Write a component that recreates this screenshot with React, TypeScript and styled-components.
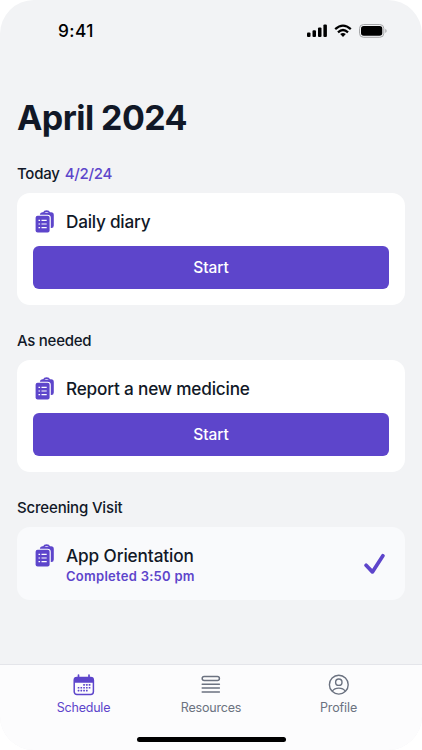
import React from "react";
import styled, { createGlobalStyle } from "styled-components";

const purple = "#5d45cb";
const ink = "#111827";

const GlobalStyle = createGlobalStyle`
  * { box-sizing: border-box; }
  body { margin: 0; background: #fff; font-family: Inter, "Liberation Sans", sans-serif; }
`;

const Screen = styled.div`
  width: 422px;
  height: 750px;
  display: flex;
  flex-direction: column;
  overflow: hidden;
  border-radius: 34px;
  background: #f2f3f5;
  color: ${ink};
`;

const StatusBar = styled.header`
  height: 61px;
  padding: 0 35px 0 58px;
  display: flex;
  align-items: center;
  justify-content: space-between;
  color: #000;
`;

const Clock = styled.span`
  font-size: 17.3px;
  font-weight: 550;
  letter-spacing: 0.4px;
  line-height: 20px;
`;

const StatusIcons = styled.div`
  display: flex;
  align-items: center;
  gap: 7px;
  svg { display: block; }
`;

const Content = styled.main`
  flex: 1;
  padding: 35px 17px 0;
`;

const Title = styled.h1`
  margin: 0;
  font-size: 34px;
  line-height: 44px;
  font-weight: 700;
  letter-spacing: -0.56px;
  white-space: nowrap;
`;

const Section = styled.section<{ $gap: number }>`
  margin-top: ${(p) => p.$gap}px;
`;

const SectionTitle = styled.h2<{ $spacing: number }>`
  margin: 0 0 9px;
  font-size: 15px;
  line-height: 20px;
  font-weight: 540;
  letter-spacing: ${(p) => p.$spacing}px;
  white-space: nowrap;
`;

const DateText = styled.span`
  margin-left: 5px;
  color: ${purple};
`;

const Card = styled.article<{ $muted?: boolean }>`
  height: ${(p) => (p.$muted ? 73 : 112)}px;
  padding: 16px;
  border-radius: 13px;
  background: ${(p) => (p.$muted ? "#f9fafc" : "#fff")};
`;

const TaskRow = styled.div`
  display: flex;
  align-items: flex-start;
  svg { display: block; flex: none; }
`;

const TaskIcon = styled.div`
  width: 33px;
  padding: 1px 0 0 2px;
`;

const TaskText = styled.div`
  flex: 1;
`;

const TaskName = styled.h3<{ $spacing: number }>`
  margin: 0;
  font-size: 17.2px;
  line-height: 25px;
  font-weight: 520;
  letter-spacing: ${(p) => p.$spacing}px;
  white-space: nowrap;
`;

const Completed = styled.p`
  margin: 0;
  color: ${purple};
  font-size: 13px;
  line-height: 16px;
  font-weight: 600;
  letter-spacing: 0.27px;
`;

const DoneMark = styled.div`
  padding: 10px 3px 0 0;
`;

const StartButton = styled.button`
  display: block;
  width: 100%;
  height: 43px;
  margin-top: 12px;
  padding: 0;
  border: 0;
  border-radius: 6px;
  background: ${purple};
  color: #fff;
  font: 500 15.5px/43px Inter, sans-serif;
  letter-spacing: -0.05px;
`;

const TabBar = styled.nav`
  height: 86px;
  border-top: 1px solid #e4e5ea;
  background: #fcfcfd;
  display: flex;
  flex-direction: column;
  align-items: center;
`;

const Tabs = styled.div`
  height: 72px;
  display: grid;
  grid-template-columns: repeat(3, 127.5px);
`;

const Tab = styled.a<{ $active?: boolean }>`
  display: flex;
  flex-direction: column;
  align-items: center;
  padding-top: 9px;
  color: ${(p) => (p.$active ? purple : "#6b7280")};
  svg { display: block; }
`;

const TabLabel = styled.span<{ $spacing: number }>`
  margin-top: 4px;
  font-size: 12.5px;
  line-height: 16px;
  letter-spacing: ${(p) => p.$spacing}px;
`;

const HomeIndicator = styled.div`
  width: 149px;
  height: 5px;
  border-radius: 3px;
  background: #000;
`;

const Signal = () => (
  <svg width="20" height="14" viewBox="0 0 20 14">
    <rect x="0" y="8.5" width="3.5" height="4.5" rx="1.1" />
    <rect x="5.5" y="6.3" width="3.5" height="6.7" rx="1.1" />
    <rect x="11" y="3.4" width="3.5" height="9.6" rx="1.1" />
    <rect x="16.4" y="0.4" width="3.5" height="12.6" rx="1.1" />
  </svg>
);

const Wifi = () => (
  <svg width="18" height="14" viewBox="0 0 18 14" fill="none" stroke="#000" strokeWidth="2.3">
    <path d="M1.2 5.1Q9 -1.9 16.8 5.1M4 8.3Q9 3.7 14 8.3" />
    <path d="M6.2 10.1Q9 7.9 11.8 10.1L9 13Z" fill="#000" stroke="none" />
  </svg>
);

const Battery = () => (
  <svg width="28" height="14" viewBox="0 0 28 14">
    <rect x=".5" y=".5" width="24.3" height="12.8" rx="4" fill="none" stroke="#a5a6a8" />
    <rect x="2" y="2" width="21.3" height="9.8" rx="2.7" />
    <path d="M26.3 4.8Q29 6.9 26.3 9Z" fill="#a5a6a8" />
  </svg>
);

const Clipboards = () => (
  <svg width="20" height="23" viewBox="0 0 20 23">
    <path
      d="M4.8 4.7Q5 2.2 7.3 2.2H8.2Q8.7.3 11.6.3T15 2.2H16.1Q18.8 2.2 18.8 4.9V15.5Q18.8 18 16.4 18H15.8V8Q15.8 4.7 12.5 4.7Z"
      fill={purple}
    />
    <path d="M9.5 2.8Q9.8 1.9 11.6 1.9T13.7 2.8Z" fill="#fff" />
    <rect x=".6" y="5.8" width="14" height="16.6" rx="2" fill={purple} />
    <path d="M3.5 10.3h1.6M3.5 14h1.6M3.5 17.7h1.6M6.5 10.3h5.2M6.5 14h5.2M6.5 17.7h5.2" stroke="#fff" strokeWidth="1.2" />
  </svg>
);

const Check = () => (
  <svg width="22" height="22" viewBox="0 0 22 22" fill="none" stroke={purple} strokeWidth="3.7" strokeLinecap="round" strokeLinejoin="round">
    <path d="M2.1 12.3L8.4 18.9L18.9 2.7" />
  </svg>
);

const dots = [[10, 10.7], [13, 10.7], [16, 10.7], [4, 13.5], [7, 13.5], [10, 13.5], [13, 13.5], [16, 13.5], [4, 16.3], [7, 16.3], [10, 16.3], [13, 16.3]];

const Calendar = () => (
  <svg width="22" height="22" viewBox="0 0 22 22" fill={purple}>
    <path d="M5.5 1.1V5M16 1.1V5" stroke={purple} strokeWidth="1.7" strokeLinecap="round" />
    <rect x="1.2" y="3.6" width="19.2" height="16.8" rx="2.7" fill="none" stroke={purple} strokeWidth="1.5" />
    <path d="M1.3 8.8V5.6Q1.3 3.6 3.3 3.6H18.3Q20.3 3.6 20.3 5.6V8.8Z" />
    {dots.map(([x, y]) => (
      <rect key={`${x}-${y}`} x={x * 0.92 + 1} y={y - 0.6} width="1.7" height="1.7" rx=".4" />
    ))}
  </svg>
);

const List = () => (
  <svg width="22" height="22" viewBox="0 0 22 22" fill="none" stroke="currentColor" strokeWidth="1.5" strokeLinecap="round">
    <rect x="2.2" y="2.5" width="17.2" height="4.1" rx="2" />
    <path d="M2.2 10.2h17.2M2.2 14.1h17.2M2.2 18h17.2" />
  </svg>
);

const Person = () => (
  <svg width="22" height="22" viewBox="0 0 22 22" fill="none" stroke="currentColor" strokeWidth="1.4">
    <circle cx="10.8" cy="10.7" r="9.4" />
    <circle cx="10.8" cy="8.2" r="3.2" />
    <path d="M4.3 17.2C6.2 14.3 8 14.1 10.8 14.1S15.4 14.3 17.3 17.2" />
  </svg>
);

export default function App() {
  return (
    <>
      <GlobalStyle />
      <Screen>
        <StatusBar>
          <Clock>9:41</Clock>
          <StatusIcons><Signal /><Wifi /><Battery /></StatusIcons>
        </StatusBar>
        <Content>
          <Title>April 2024</Title>
          <Section $gap={24}>
            <SectionTitle $spacing={-0.25}>Today<DateText>4/2/24</DateText></SectionTitle>
            <Card>
              <TaskRow>
                <TaskIcon><Clipboards /></TaskIcon>
                <TaskText><TaskName $spacing={-0.24}>Daily diary</TaskName></TaskText>
              </TaskRow>
              <StartButton>Start</StartButton>
            </Card>
          </Section>
          <Section $gap={26}>
            <SectionTitle $spacing={-0.27}>As needed</SectionTitle>
            <Card>
              <TaskRow>
                <TaskIcon><Clipboards /></TaskIcon>
                <TaskText><TaskName $spacing={-0.19}>Report a new medicine</TaskName></TaskText>
              </TaskRow>
              <StartButton>Start</StartButton>
            </Card>
          </Section>
          <Section $gap={26}>
            <SectionTitle $spacing={-0.17}>Screening Visit</SectionTitle>
            <Card $muted>
              <TaskRow>
                <TaskIcon><Clipboards /></TaskIcon>
                <TaskText>
                  <TaskName $spacing={-0.11}>App Orientation</TaskName>
                  <Completed>Completed 3:50 pm</Completed>
                </TaskText>
                <DoneMark><Check /></DoneMark>
              </TaskRow>
            </Card>
          </Section>
        </Content>
        <TabBar>
          <Tabs>
            <Tab $active><Calendar /><TabLabel $spacing={-0.2}>Schedule</TabLabel></Tab>
            <Tab><List /><TabLabel $spacing={-0.2}>Resources</TabLabel></Tab>
            <Tab><Person /><TabLabel $spacing={-0.1}>Profile</TabLabel></Tab>
          </Tabs>
          <HomeIndicator />
        </TabBar>
      </Screen>
    </>
  );
}
